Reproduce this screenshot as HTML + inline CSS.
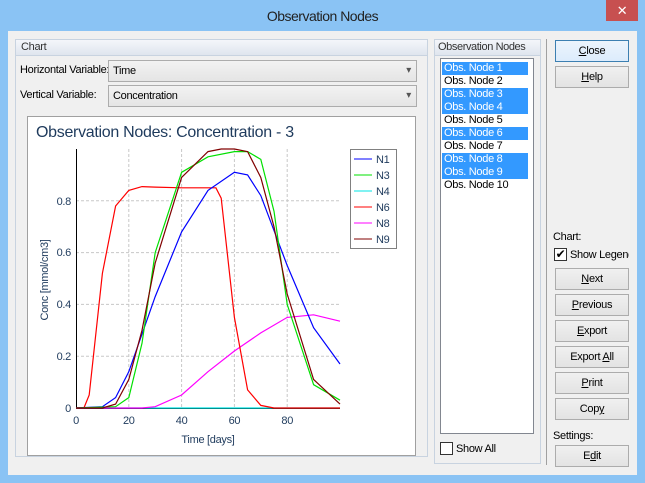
<!DOCTYPE html>
<html><head><meta charset="utf-8"><style>
*{box-sizing:border-box}
body{margin:0;width:645px;height:483px;background:#8ac3f4;font-family:"Liberation Sans",sans-serif;font-size:11px;letter-spacing:-0.3px;color:#000;position:relative;overflow:hidden}
.abs{position:absolute}
.title{left:0;top:0;width:645px;height:32px;text-align:center;line-height:32px;font-size:14px;letter-spacing:-0.5px;color:#222}
.x{left:606px;top:0;width:32px;height:21px;background:#c75050;color:#fff;text-align:center;line-height:21px;font-size:13px}
.client{left:8px;top:31px;width:629px;height:444px;background:#f0f0f0}
.grp{border:1px solid #c8d3e0;background:#fff}
.ghead{height:16px;background:linear-gradient(#f4f6fa,#dfe5ee);border-bottom:1px solid #c8d3e0;color:#333;padding-left:5px;line-height:15px;font-size:11px}
.combo{border:1px solid #acacac;background:linear-gradient(#f2f2f2,#e5e5e5);height:22px;line-height:20px;padding-left:4px;font-size:11px}
.combo span{position:absolute;right:5px;top:0;font-size:10px;color:#555}
.lbl{font-size:11px}
.btn{left:555px;width:74px;height:22px;border:1px solid #acacac;background:linear-gradient(#f0f0f0,#e3e3e3);text-align:center;line-height:20px;font-size:11px}
.item{left:442px;width:86px;height:13px;line-height:13px;font-size:11px;padding-left:2px}
.sel{background:#3399ff;color:#fff}
u{text-decoration:underline}
</style></head><body>
<div class="abs title">Observation Nodes</div>
<div class="abs x">✕</div>
<div class="abs client"></div>

<div class="abs grp" style="left:15px;top:39px;width:413px;height:418px;background:#f0f0f0">
<div class="ghead">Chart</div></div>
<div class="abs lbl" style="left:20px;top:64px">Horizontal Variable:</div>
<div class="abs combo" style="left:108px;top:60px;width:309px">Time<span>▾</span></div>
<div class="abs lbl" style="left:20px;top:89px">Vertical Variable:</div>
<div class="abs combo" style="left:108px;top:85px;width:309px">Concentration<span>▾</span></div>

<div class="abs" style="left:27px;top:116px;width:389px;height:340px;background:#fff;border:1px solid #a0a0a0"></div>
<svg class="abs" style="left:0;top:0" width="645" height="483">
<text x="36" y="137" font-family="Liberation Sans" font-size="16" fill="#1e3a5c">Observation Nodes: Concentration - 3</text>
<g stroke="#c8c8c8" stroke-dasharray="3,2" stroke-width="1">
<line x1="128.8" y1="149" x2="128.8" y2="408"/><line x1="181.6" y1="149" x2="181.6" y2="408"/><line x1="234.4" y1="149" x2="234.4" y2="408"/><line x1="287.2" y1="149" x2="287.2" y2="408"/>
<line x1="76" y1="356.2" x2="340" y2="356.2"/><line x1="76" y1="304.4" x2="340" y2="304.4"/><line x1="76" y1="252.6" x2="340" y2="252.6"/><line x1="76" y1="200.8" x2="340" y2="200.8"/>
</g>
<line x1="76.5" y1="149" x2="76.5" y2="408" stroke="#000"/>
<line x1="76" y1="408.5" x2="340" y2="408.5" stroke="#000"/>
<g font-family="Liberation Sans" font-size="11" fill="#1e3a5c" text-anchor="end">
<text x="71" y="412">0</text><text x="71" y="360">0.2</text><text x="71" y="308">0.4</text><text x="71" y="256">0.6</text><text x="71" y="205">0.8</text>
</g>
<g font-family="Liberation Sans" font-size="11" fill="#1e3a5c" text-anchor="middle">
<text x="76" y="424">0</text><text x="128.8" y="424">20</text><text x="181.6" y="424">40</text><text x="234.4" y="424">60</text><text x="287.2" y="424">80</text>
<text x="208" y="443">Time [days]</text>
<text transform="translate(48,280) rotate(-90)">Conc [mmol/cm3]</text>
</g>
<g fill="none" stroke-width="1.2">
<polyline stroke="#00e5e5" points="76,408 340,408"/>
<polyline stroke="#ff00ff" points="76,408 142,408 155.2,406.7 181.6,395 208,371.7 234.4,351 260.8,332.9 287.2,317.4 313.6,314.8 340,321.2"/>
<polyline stroke="#ff0000" points="76,408 83.9,408 89.2,395 102.4,273.3 115.6,206 128.8,190.4 142,186.6 155.2,187.1 181.6,187.8 208,187.8 215.9,187.8 221.2,198.2 234.4,317.4 247.6,389.9 260.8,405.4 274,408 340,408"/>
<polyline stroke="#0000ff" points="76,408 102.4,406.7 115.6,397.6 128.8,371.7 155.2,296.6 181.6,231.9 208,190.4 234.4,172.3 247.6,174.9 260.8,195.6 287.2,265.5 313.6,327.7 340,364"/>
<polyline stroke="#00e000" points="76,408 115.6,406.7 128.8,397.6 142,343.3 155.2,252.6 181.6,172.3 208,156.8 234.4,151.6 247.6,151.6 260.8,159.4 274,211.2 287.2,304.4 313.6,384.7 340,400.2"/>
<polyline stroke="#800000" points="76,408 102.4,408 115.6,404.1 128.8,379.5 142,330.3 155.2,263 181.6,177.5 208,151.6 221.2,149 234.4,149 247.6,151.6 260.8,177.5 274,226.7 287.2,294 313.6,379.5 340,404.1"/>
</g>
<rect x="350.5" y="149.5" width="46" height="99" fill="#fff" stroke="#808080"/>
<g font-family="Liberation Sans" font-size="11" fill="#1e3a5c">
<line x1="354" y1="159" x2="372" y2="159" stroke="#0000ff"/><text x="376" y="163">N1</text>
<line x1="354" y1="175" x2="372" y2="175" stroke="#00e000"/><text x="376" y="179">N3</text>
<line x1="354" y1="191" x2="372" y2="191" stroke="#00e5e5"/><text x="376" y="195">N4</text>
<line x1="354" y1="207" x2="372" y2="207" stroke="#ff0000"/><text x="376" y="211">N6</text>
<line x1="354" y1="223" x2="372" y2="223" stroke="#ff00ff"/><text x="376" y="227">N8</text>
<line x1="354" y1="239" x2="372" y2="239" stroke="#800000"/><text x="376" y="243">N9</text>
</g>
<line x1="546.5" y1="39" x2="546.5" y2="465" stroke="#a0a0a0"/>
</svg>

<div class="abs grp" style="left:434px;top:39px;width:107px;height:425px;background:#f0f0f0"><div class="ghead" style="padding-left:3px;letter-spacing:-0.4px">Observation Nodes</div></div>
<div class="abs" style="left:440px;top:58px;width:94px;height:376px;background:#fff;border:1px solid #828790"></div>
<div class="abs item sel" style="top:62px">Obs. Node 1</div>
<div class="abs item" style="top:75px">Obs. Node 2</div>
<div class="abs item sel" style="top:88px">Obs. Node 3</div>
<div class="abs item sel" style="top:101px">Obs. Node 4</div>
<div class="abs item" style="top:114px">Obs. Node 5</div>
<div class="abs item sel" style="top:127px">Obs. Node 6</div>
<div class="abs item" style="top:140px">Obs. Node 7</div>
<div class="abs item sel" style="top:153px">Obs. Node 8</div>
<div class="abs item sel" style="top:166px">Obs. Node 9</div>
<div class="abs item" style="top:179px">Obs. Node 10</div>
<div class="abs" style="left:440px;top:442px;width:13px;height:13px;border:1px solid #333;background:#fff"></div>
<div class="abs lbl" style="left:456px;top:443px">Show All</div>

<div class="abs btn" style="top:40px;border-color:#3c7fb1;background:linear-gradient(#ecf4fc,#dcecfc)"><u>C</u>lose</div>
<div class="abs btn" style="top:66px"><u>H</u>elp</div>
<div class="abs lbl" style="left:553px;top:231px">Chart:</div>
<div class="abs" style="left:554px;top:248px;width:13px;height:13px;border:1px solid #333;background:#fff;font-size:12px;line-height:11px;text-align:center">✔</div>
<div class="abs lbl" style="left:570px;top:249px;width:59px;overflow:hidden;white-space:nowrap">Show Legend</div>
<div class="abs btn" style="top:268px"><u>N</u>ext</div>
<div class="abs btn" style="top:294px"><u>P</u>revious</div>
<div class="abs btn" style="top:320px"><u>E</u>xport</div>
<div class="abs btn" style="top:346px">Export <u>A</u>ll</div>
<div class="abs btn" style="top:372px"><u>P</u>rint</div>
<div class="abs btn" style="top:398px">Cop<u>y</u></div>
<div class="abs lbl" style="left:553px;top:430px">Settings:</div>
<div class="abs btn" style="top:445px">E<u>d</u>it</div>
</body></html>
